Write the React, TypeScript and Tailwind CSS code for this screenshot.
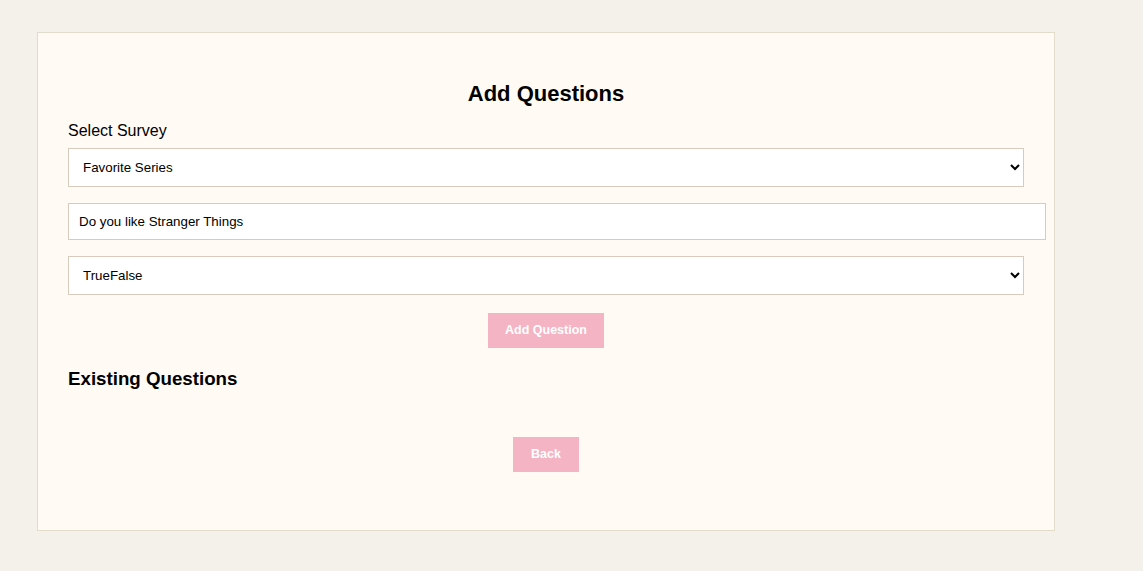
import { useState } from "react";

export default function App() {
  const [survey, setSurvey] = useState("Favorite Series");
  const [question, setQuestion] = useState("Do you like Stranger Things");
  const [type, setType] = useState("TrueFalse");

  return (
    <div className="min-h-screen w-full bg-[#f4f0ea] pt-[32px] pl-[37px] font-['Liberation_Sans',Arial,sans-serif] text-black">
      <section className="w-[1018px] border border-[#e3dccb] bg-[#fffaf4] px-[30px] pt-[47px] pb-[58px]">
        <h2 className="text-center text-[22px] leading-[28px] font-bold">Add Questions</h2>
        <label htmlFor="survey" className="mt-[14px] block text-[16px] leading-[18px]">
          Select Survey
        </label>
        <select
          id="survey"
          value={survey}
          onChange={(e) => setSurvey(e.target.value)}
          className="mt-[8px] block h-[39px] w-full border border-[#d8cbbb] bg-white px-[10px] text-[13.33px] outline-none"
        >
          <option>Favorite Series</option>
          <option>Favorite Movies</option>
        </select>
        <input
          type="text"
          value={question}
          onChange={(e) => setQuestion(e.target.value)}
          className="mt-[16px] box-content block h-[15px] w-full border border-[#d8cbbb] bg-white px-[10px] py-[10px] text-[13.33px] leading-[15px] outline-none"
        />
        <select
          value={type}
          onChange={(e) => setType(e.target.value)}
          className="mt-[16px] block h-[39px] w-full border border-[#d8cbbb] bg-white px-[10px] text-[13.33px] outline-none"
        >
          <option>TrueFalse</option>
          <option>MultipleChoice</option>
          <option>Text</option>
        </select>
        <div className="mt-[18px] flex justify-center">
          <button className="h-[35px] w-[116px] bg-[#f4b4c4] text-[12.5px] font-bold text-white">
            Add Question
          </button>
        </div>
        <h3 className="mt-[20px] text-[18.72px] leading-[22px] font-bold">Existing Questions</h3>
        <div className="mt-[47px] flex justify-center">
          <button className="h-[35px] w-[66px] bg-[#f4b4c4] text-[12.5px] font-bold text-white">
            Back
          </button>
        </div>
      </section>
    </div>
  );
}
